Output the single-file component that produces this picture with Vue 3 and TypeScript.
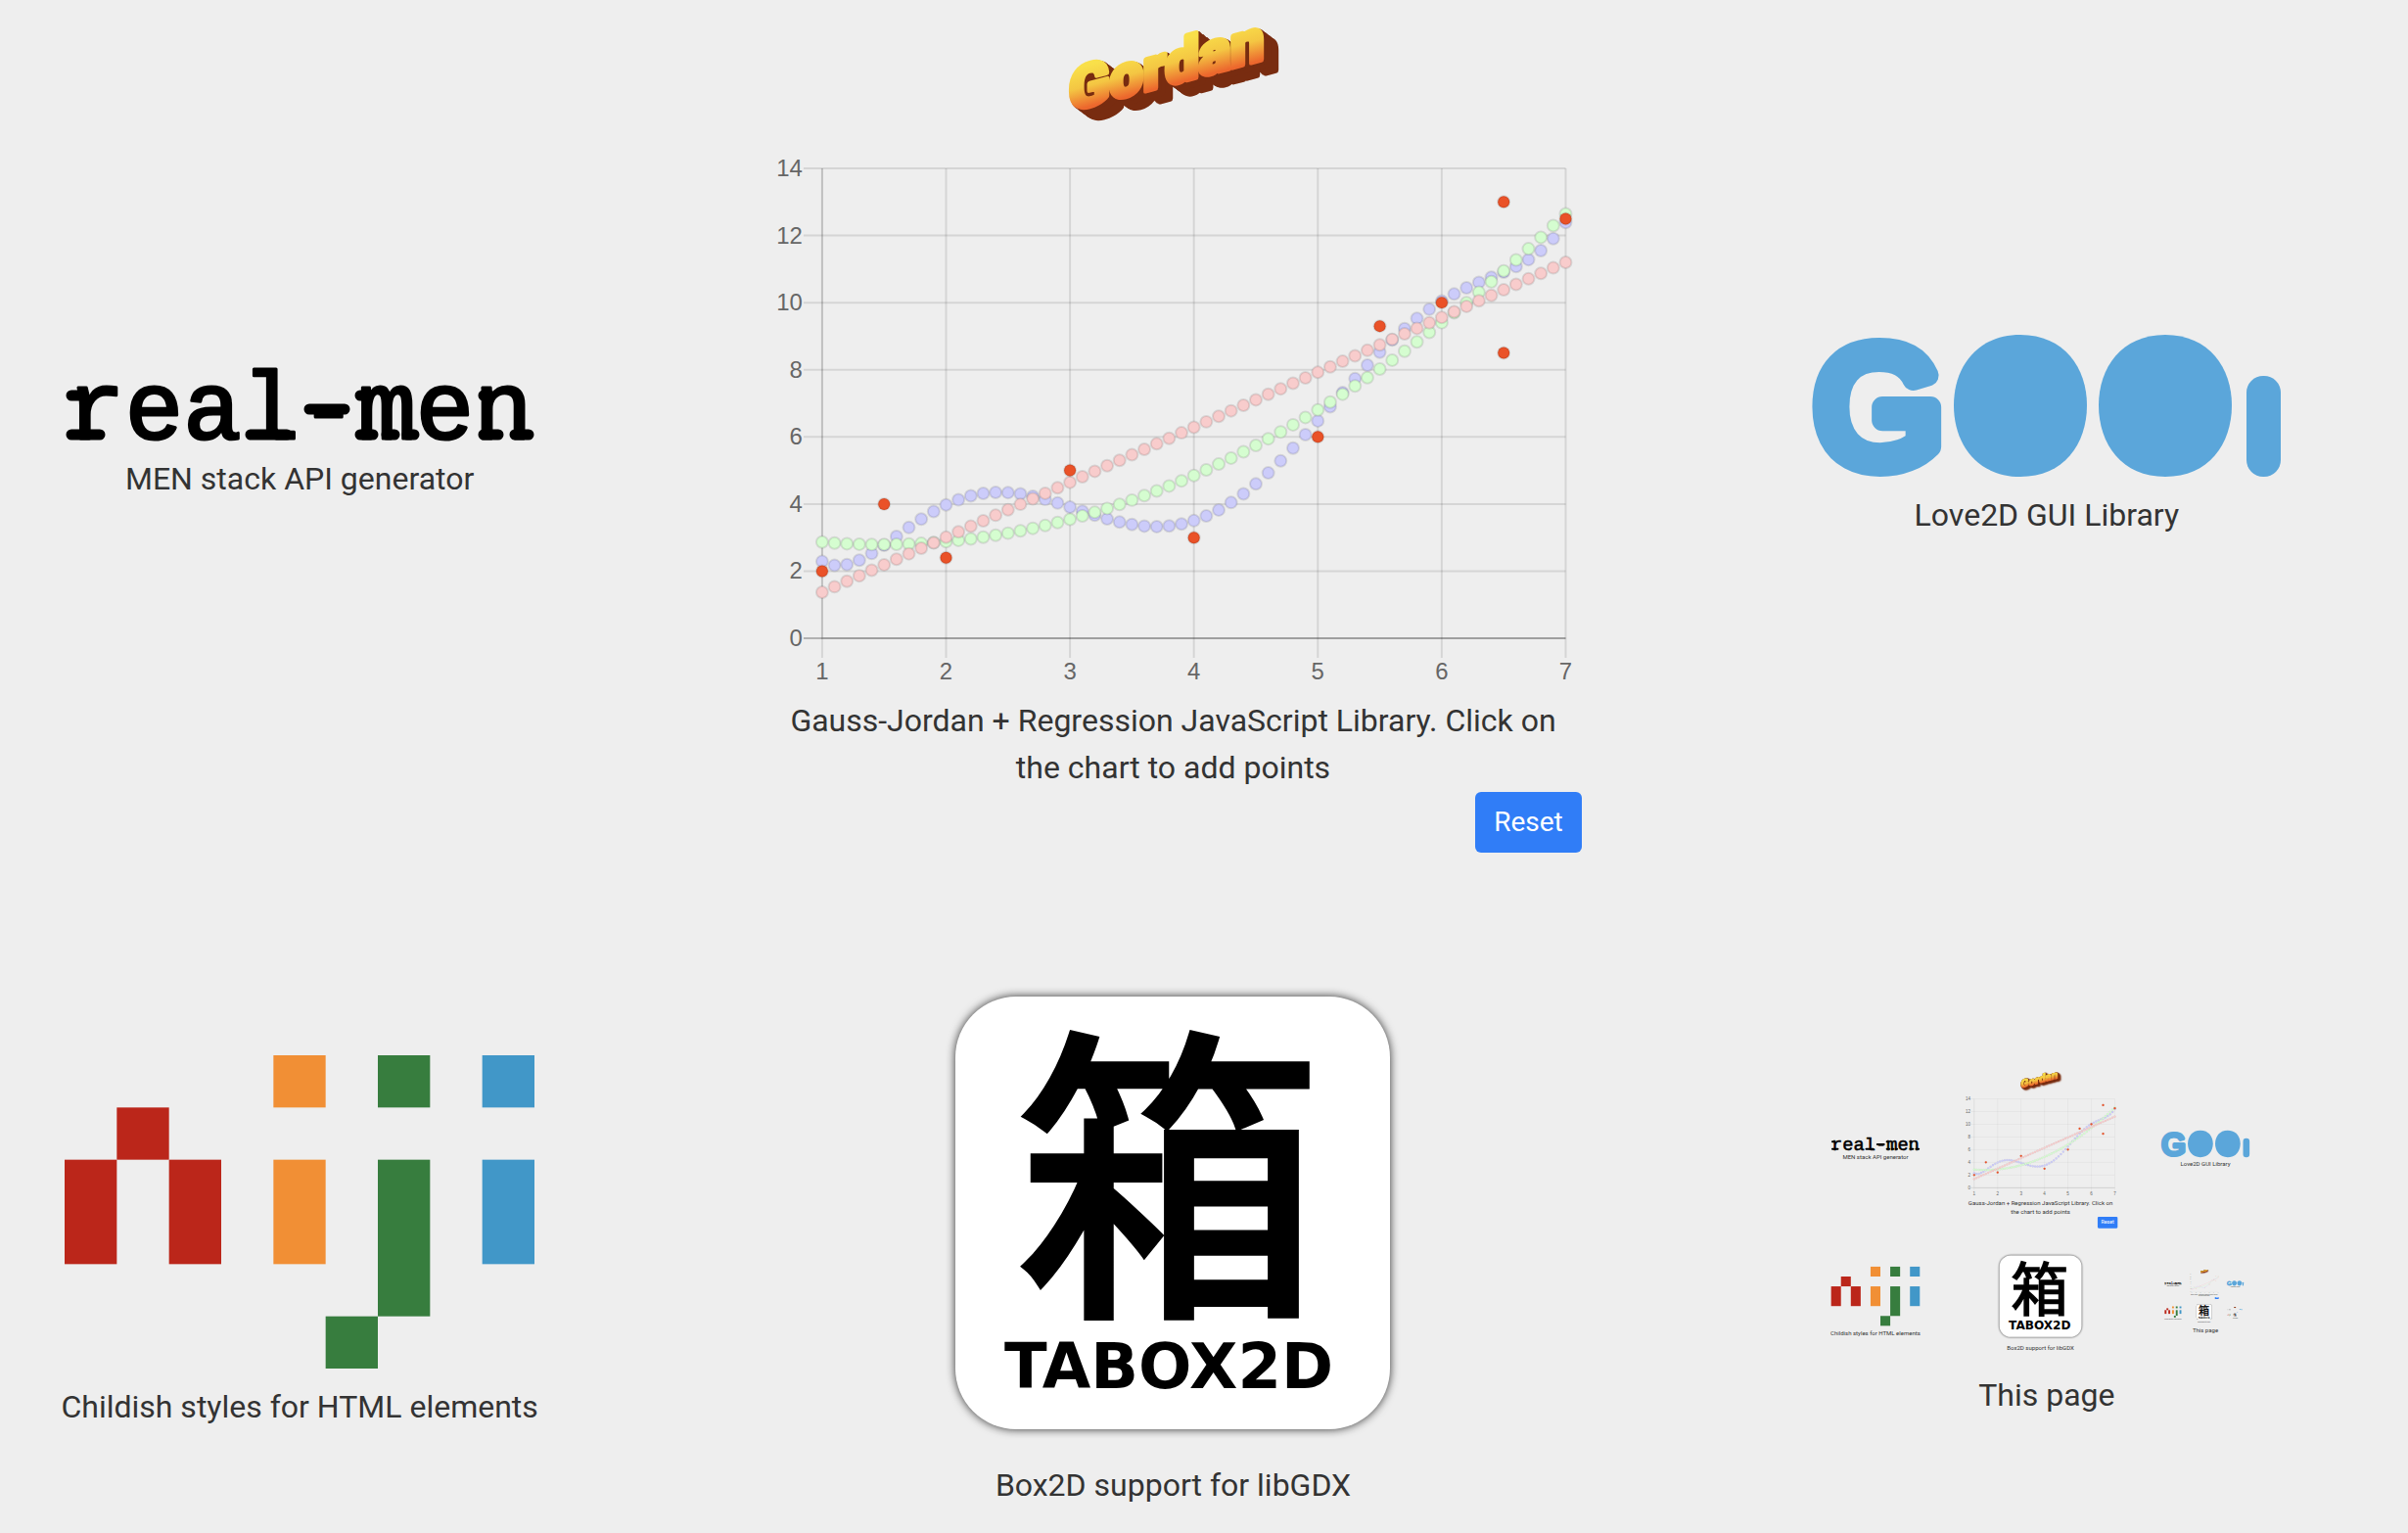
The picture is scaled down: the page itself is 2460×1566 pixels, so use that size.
<script setup lang="ts">
import { computed, ref } from 'vue'

interface Point {
  x: number
  y: number
}

interface Cell {
  x: number
  y: number
  h: number
  fill: string
}

const initialPoints: Point[] = [
  { x: 1, y: 2 },
  { x: 1.5, y: 4 },
  { x: 2, y: 2.4 },
  { x: 3, y: 5 },
  { x: 4, y: 3 },
  { x: 5, y: 6 },
  { x: 5.5, y: 9.3 },
  { x: 6, y: 10 },
  { x: 6.5, y: 13 },
  { x: 6.5, y: 8.5 },
  { x: 7, y: 12.5 },
]

const points = ref<Point[]>([...initialPoints])

const xTicks = [1, 2, 3, 4, 5, 6, 7]
const yTicks = [0, 2, 4, 6, 8, 10, 12, 14]
const plot = { left: 59, right: 820, top: 22, bottom: 503 }

const px = (x: number): number => plot.left + ((x - 1) * (plot.right - plot.left)) / 6
const py = (y: number): number => plot.bottom - (y * (plot.bottom - plot.top)) / 14

/** Solves an augmented matrix by Gauss-Jordan elimination with partial pivoting. */
function solve(m: number[][]): number[] {
  const n = m.length
  for (let c = 0; c < n; c++) {
    let p = c
    for (let r = c + 1; r < n; r++) if (Math.abs(m[r][c]) > Math.abs(m[p][c])) p = r
    ;[m[c], m[p]] = [m[p], m[c]]
    const d = m[c][c]
    for (let k = c; k <= n; k++) m[c][k] /= d
    for (let r = 0; r < n; r++) {
      if (r === c) continue
      const f = m[r][c]
      for (let k = c; k <= n; k++) m[r][k] -= f * m[c][k]
    }
  }
  return m.map((row) => row[n])
}

/** Least-squares polynomial, sampled every tenth between 1 and 7. */
function regression(data: Point[], degree: number): Point[] {
  const norm = (x: number): number => (x - 4) / 3
  const m: number[][] = []
  for (let i = 0; i <= degree; i++) {
    const row: number[] = []
    for (let j = 0; j <= degree; j++) row.push(data.reduce((s, p) => s + norm(p.x) ** (i + j), 0))
    row.push(data.reduce((s, p) => s + p.y * norm(p.x) ** i, 0))
    m.push(row)
  }
  const coef = solve(m)
  return Array.from({ length: 61 }, (_, k) => {
    const x = 1 + k / 10
    return { x, y: coef.reduce((s, c, i) => s + c * norm(x) ** i, 0) }
  })
}

const curves = computed(() => [
  { name: 'sextic', fill: '#ccccfa', data: regression(points.value, 6) },
  { name: 'quadratic', fill: '#d5fdd0', data: regression(points.value, 2) },
  { name: 'linear', fill: '#f8cccc', data: regression(points.value, 1) },
])

function addPoint(event: MouseEvent): void {
  const box = (event.currentTarget as SVGElement).getBoundingClientRect()
  const sx = ((event.clientX - box.left) * 836) / box.width
  const sy = ((event.clientY - box.top) * 563) / box.height
  const x = 1 + ((sx - plot.left) * 6) / (plot.right - plot.left)
  const y = ((plot.bottom - sy) * 14) / (plot.bottom - plot.top)
  if (x >= 1 && x <= 7 && y >= 0 && y <= 14) points.value.push({ x, y })
}

function reset(): void {
  points.value = [...initialPoints]
}

const cells: Cell[] = [
  { x: 1, y: 1, h: 1, fill: '#bb261a' },
  { x: 0, y: 2, h: 2, fill: '#bb261a' },
  { x: 2, y: 2, h: 2, fill: '#bb261a' },
  { x: 4, y: 0, h: 1, fill: '#f18f35' },
  { x: 4, y: 2, h: 2, fill: '#f18f35' },
  { x: 6, y: 0, h: 1, fill: '#377d3e' },
  { x: 6, y: 2, h: 3, fill: '#377d3e' },
  { x: 5, y: 5, h: 1, fill: '#377d3e' },
  { x: 8, y: 0, h: 1, fill: '#4197c8' },
  { x: 8, y: 2, h: 2, fill: '#4197c8' },
]

const nested = 'translate(1858 1091) scale(0.1888)'
</script>

<template>
  <main class="projects">
    <article class="project">
      <a class="logo" href="#real-men" aria-label="real-men">
        <svg viewBox="0 0 480 70">
          <g id="logo-real-men">
            <text class="mono" x="240" y="68" text-anchor="middle">real-men</text>
            <g class="slabs">
              <path d="M7 64H36M7 24H16M190 64H227M250 38H286" />
              <path d="M302 64H315M329 64H337M350 64H357M302 24H308" />
              <path d="M428 64H443M460 64H474M428 24H434" />
            </g>
          </g>
        </svg>
      </a>
      <p class="caption">MEN stack API generator</p>
    </article>

    <article class="project">
      <svg class="gordan" viewBox="0 0 218 128">
        <defs>
          <linearGradient id="sunset" x1="0" y1="0" x2="0" y2="1">
            <stop offset="0.2" stop-color="#f9e04a" />
            <stop offset="0.5" stop-color="#f4c643" />
            <stop offset="0.8" stop-color="#ec672d" />
          </linearGradient>
        </defs>
        <g id="logo-gordan" class="extrude">
          <text class="wordart" transform="translate(3 92) skewY(-15)" x="0" y="0">Gordan</text>
        </g>
      </svg>
      <svg class="chart" viewBox="0 0 836 563" @click="addPoint">
        <g id="gordan-chart">
          <g class="grid">
            <line v-for="t in xTicks" :key="'x' + t" :x1="px(t)" :x2="px(t)" y1="22" y2="523" />
            <line v-for="t in yTicks.slice(1)" :key="'y' + t" x1="40" x2="820" :y1="py(t)" :y2="py(t)" />
            <line class="zero" x1="40" x2="820" y1="503" y2="503" />
            <path d="M59 22V503H820" />
          </g>
          <g class="ticks">
            <text v-for="t in yTicks" :key="'ly' + t" x="39" :y="py(t) + 8" text-anchor="end">{{ t }}</text>
            <text v-for="t in xTicks" :key="'lx' + t" :x="px(t)" y="545" text-anchor="middle">{{ t }}</text>
          </g>
          <g v-for="c in curves" :key="c.name" class="dots" :fill="c.fill">
            <circle v-for="(p, i) in c.data" :key="i" :cx="px(p.x)" :cy="py(p.y)" r="6" />
          </g>
          <g class="dots" fill="#ea5228">
            <circle v-for="(p, i) in points" :key="i" :cx="px(p.x)" :cy="py(p.y)" r="6" />
          </g>
        </g>
      </svg>
      <p class="caption">Gauss-Jordan + Regression JavaScript Library. Click on the chart to add points</p>
      <button class="reset" type="button" @click="reset">Reset</button>
    </article>

    <article class="project">
      <a class="logo" href="#gooi" aria-label="Gooi">
        <svg viewBox="0 0 480 145">
          <g id="logo-gooi" fill="#5ba6da">
            <text class="round" x="3" y="132">G</text>
            <path d="M213 0C258 0 281 34 281 72C281 112 257 145 213 145C169 145 145 112 145 72C145 34 168 0 213 0Z" />
            <path d="M361 0C406 0 429 34 429 72C429 112 405 145 361 145C317 145 293 112 293 72C293 34 316 0 361 0Z" />
            <rect x="444" y="42" width="35" height="103" rx="17" />
          </g>
        </svg>
      </a>
      <p class="caption">Love2D GUI Library</p>
    </article>

    <article class="project">
      <a class="logo" href="#niji" aria-label="niji">
        <svg viewBox="0 0 9 6">
          <g id="logo-niji">
            <rect v-for="(c, i) in cells" :key="i" :x="c.x" :y="c.y" width="1" :height="c.h" :fill="c.fill" />
          </g>
        </svg>
      </a>
      <p class="caption">Childish styles for HTML elements</p>
    </article>

    <article class="project">
      <a class="logo" href="#tabox2d" aria-label="Tabox2D">
        <svg viewBox="0 0 480 480">
          <g id="logo-tabox">
            <rect class="tile" x="18" y="20" width="444" height="442" rx="62" />
            <text class="kanji" x="236" y="322" text-anchor="middle">箱</text>
            <text class="wide" x="236" y="420" text-anchor="middle">TABOX2D</text>
          </g>
        </svg>
      </a>
      <p class="caption">Box2D support for libGDX</p>
    </article>

    <article class="project">
      <a class="logo" href="#this-page" aria-label="This page preview">
        <svg viewBox="-38 0 2542 1565">
          <defs>
            <g id="page-preview">
              <use href="#logo-real-men" transform="translate(66 380)" />
              <use href="#logo-gordan" transform="translate(1090 22)" />
              <use href="#gordan-chart" transform="translate(781 150)" />
              <use href="#logo-gooi" transform="translate(1851 343)" />
              <use href="#logo-niji" transform="translate(66 1080) scale(53.333)" />
              <use href="#logo-tabox" transform="translate(959 999)" />
              <g class="small-captions">
                <text x="306" y="500">MEN stack API generator</text>
                <text x="1199" y="748">Gauss-Jordan + Regression JavaScript Library. Click on</text>
                <text x="1199" y="796">the chart to add points</text>
                <text x="2091" y="537">Love2D GUI Library</text>
                <text x="306" y="1449">Childish styles for HTML elements</text>
                <text x="1199" y="1530">Box2D support for libGDX</text>
                <text x="2091" y="1437">This page</text>
              </g>
              <rect x="1508" y="810" width="108" height="62" rx="6" fill="#307df7" />
              <text class="small-reset" x="1562" y="850">Reset</text>
            </g>
          </defs>
          <use href="#page-preview" />
          <g :transform="nested">
            <use href="#page-preview" />
            <g :transform="nested">
              <use href="#page-preview" />
            </g>
          </g>
        </svg>
      </a>
      <p class="caption">This page</p>
    </article>
  </main>
</template>

<style>
body {
  background: #eeeeee;
}
</style>

<style scoped>
.projects {
  display: grid;
  grid-template-columns: 488fr 834fr 488fr;
  column-gap: 231px;
  row-gap: 127px;
  align-items: center;
  padding: 22px 125px 22px 62px;
  color: #333333;
  font-family: Roboto, "Liberation Sans", sans-serif;
  font-size: 32px;
  line-height: 48px;
}

.project {
  display: flex;
  flex-direction: column;
  align-items: center;
  min-width: 0;
}

.logo {
  display: block;
  width: 100%;
  max-width: 480px;
  margin-bottom: 15px;
}

svg {
  display: block;
  width: 100%;
  overflow: visible;
}

.gordan {
  width: 218px;
}

.chart {
  cursor: crosshair;
}

.caption {
  margin: 0;
  padding: 0 16px;
  text-align: center;
}

.logo + .caption {
  padding: 0;
  white-space: nowrap;
}

.reset {
  align-self: flex-end;
  margin-top: 1px;
  padding: 10px 19px;
  border: 0;
  border-radius: 6px;
  background: #307df7;
  color: #ffffff;
  font-family: inherit;
  font-size: 28px;
  line-height: 42px;
  cursor: pointer;
}

.mono {
  fill: #000000;
  stroke: #000000;
  stroke-width: 3px;
  stroke-linejoin: round;
  font: 99px "Liberation Mono", monospace;
}

.slabs {
  fill: none;
  stroke: #000000;
  stroke-width: 11px;
  stroke-linecap: round;
}

.wordart {
  fill: url(#sunset);
  stroke: url(#sunset);
  stroke-width: 5px;
  stroke-linejoin: round;
  font: 900 61px Roboto, sans-serif;
}

.extrude {
  filter: drop-shadow(1px 1px 0 #782c10) drop-shadow(2px 1px 0 #782c10)
    drop-shadow(4px 3px 0 #782c10) drop-shadow(8px 6px 0 #782c10);
}

.round {
  stroke: #5ba6da;
  stroke-width: 22px;
  stroke-linejoin: round;
  font: 168px "Liberation Sans", sans-serif;
}

.tile {
  fill: #ffffff;
  filter: drop-shadow(0 0 5px rgba(0, 0, 0, 0.8));
}

.kanji {
  fill: #000000;
  stroke: #000000;
  stroke-width: 8px;
  font: 312px "Noto Sans CJK JP", sans-serif;
}

.wide {
  fill: #000000;
  font: bold 64px "DejaVu Sans", sans-serif;
}

.grid {
  fill: none;
  stroke: rgba(0, 0, 0, 0.1);
  stroke-width: 2px;
}

.zero {
  stroke: rgba(0, 0, 0, 0.25);
}

.ticks {
  fill: #666666;
  font: 24px "Liberation Sans", sans-serif;
}

.dots {
  stroke: rgba(0, 0, 0, 0.1);
  stroke-width: 2px;
}

.small-captions,
.small-reset {
  fill: #333333;
  font: 32px Roboto, sans-serif;
  text-anchor: middle;
}

.small-reset {
  fill: #ffffff;
  font-size: 28px;
}
</style>
